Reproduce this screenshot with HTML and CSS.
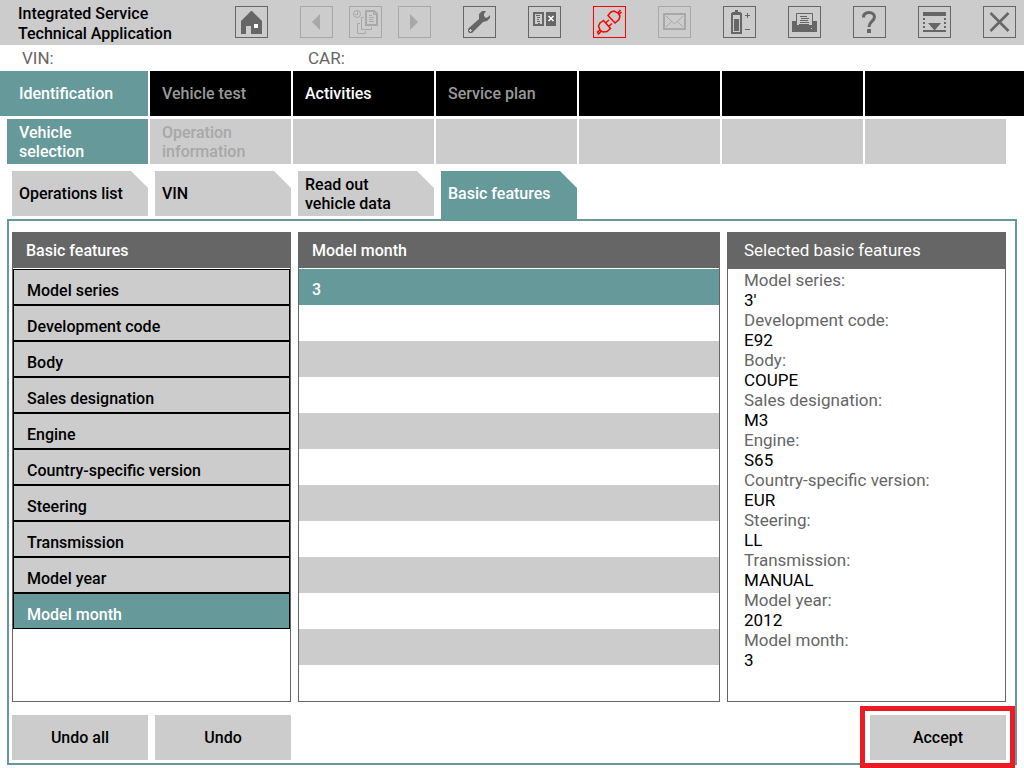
FILE: index.html
```
<!DOCTYPE html>
<html lang="en">
  <head>
    <meta charset="utf-8">
    <title>Integrated Service Technical Application</title>
    <link rel="stylesheet" href="styles.css">
  </head>
  <body>
    <header class="topbar">
      <h1 class="title">Integrated Service<br>Technical Application</h1>
      <div class="tools">
        <button class="tool" aria-label="Home"><svg viewBox="1 1 31 30"><path fill="currentColor" d="M16 5h1L27 15V28H16V20H11V28H6V15Z"/><path fill="#fff" d="M19 18h4v4h-4z"/></svg></button>
        <div class="history">
          <button class="tool" aria-label="Back" disabled><svg viewBox="1 1 31 30"><path fill="currentColor" d="M12 16L20 8V24Z"/></svg></button>
          <button class="tool" aria-label="History" disabled><svg viewBox="1 1 31 30"><g fill="none" stroke="currentColor"><circle cx="8" cy="8" r="3.5"/><path d="M8.500 5.500V8.500H6M15 11.500H12.500V23.500H22.500V21M11 17.500H8.500V27.500H16.500V25"/><path stroke-width="2" d="M17 5H25L28 8V19H17Z"/><path d="M24.500 5V8.500H28M20 9.500h3M20 11.500h5M20 13.500h4M20 15.500h5"/></g></svg></button>
          <button class="tool" aria-label="Forward" disabled><svg viewBox="1 1 31 30"><path fill="currentColor" d="M12 8L20 16L12 24Z"/></svg></button>
        </div>
        <button class="tool" aria-label="Settings"><svg viewBox="1 1 31 30"><path fill="currentColor" d="M19 5H23L21 8V10L23 12L25 11L27 9V12L24 15L20 16L11 25L9 27H6L5 25V23L7 21L16 13V8Z"/><path stroke="#ccc" d="M6 24.500h3M7.500 23v3"/></svg></button>
        <button class="tool" aria-label="Documents"><svg viewBox="1 1 31 30"><path fill="none" stroke="currentColor" stroke-width="2" d="M6 7H15V19H6Z"/><path stroke="currentColor" d="M8 9.500h4M9 11.500h3M9 13.500h2M9 15.500h3M10 17.500h2"/><path fill="currentColor" d="M18 6h10v14H18z"/><path stroke="#fff" stroke-width="1.500" d="M20.500 10L25.500 15M25.500 10L20.500 15"/></svg></button>
        <button class="tool alert" aria-label="Connection"><svg viewBox="1 1 31 30"><g fill="none" stroke="currentColor" stroke-width="1.500"><path d="M15 9.500L18 6L21 5L25 7L27 10L26 13.500L22 17ZM25 7L27.500 4M26 8.500L28.500 6"/><path d="M10.500 14.500L7 17L5.500 20L7 24L10 26L14 25.500L17.500 22.500ZM7 24L4.500 26L5.500 28L8 25.500M12.500 17L16 14M15.500 20.500L19 17.500"/></g></svg></button>
        <button class="tool" aria-label="Messages" disabled><svg viewBox="1 1 31 30"><path fill="none" stroke="currentColor" stroke-width="2" d="M6 8H27V23H6Z"/><path fill="none" stroke="currentColor" d="M8 10L16.500 18L25 10M8 21L13.500 15.500M25 21L19.500 15.500"/></svg></button>
        <button class="tool" aria-label="Battery"><svg viewBox="1 1 31 30"><path fill="none" stroke="currentColor" stroke-width="2" d="M9 8H18V27H9Z"/><path fill="currentColor" d="M12 4h3v2h3v2H9V6h3zM11 13h5v12h-5z"/><path stroke="currentColor" d="M22 9.500h5M24.500 7v5M22 23.500h5"/></svg></button>
        <button class="tool" aria-label="Print"><svg viewBox="1 1 31 30"><path fill="currentColor" d="M4 15H8V19H25V15H29V26H4Z"/><path fill="none" stroke="currentColor" d="M8.500 20V7.500H24.500V20M12 10.500h7M13 12.500h8M12 14.500h8M12 16.500h9M11 18.500h10"/><path stroke="#ccc" d="M23 22.500h1"/></svg></button>
        <button class="tool" aria-label="Help"><svg viewBox="1 1 31 30"><path fill="none" stroke="currentColor" stroke-width="3" d="M10.500 11.500C10.500 8 12.500 6.500 16 6.500C19.500 6.500 21.500 8.500 21.500 11C21.500 15 16 15.500 16 21"/><path fill="currentColor" d="M14 23h4v4h-4z"/></svg></button>
        <button class="tool" aria-label="Minimize"><svg viewBox="1 1 31 30"><path fill="currentColor" d="M5 6h23v4H5zM5 24h23v2H5zM10 17h13L17 24h-1z"/><path fill="none" stroke="currentColor" stroke-width="2" stroke-dasharray="2" d="M6 12V23M27 12V23"/></svg></button>
        <button class="tool" aria-label="Close"><svg viewBox="1 1 31 30"><path fill="none" stroke="currentColor" stroke-width="2.500" d="M7.500 7L25.500 25M25.500 7L7.500 25"/></svg></button>
      </div>
    </header>

    <div class="vehicle">
      <span>VIN:</span>
      <span>CAR:</span>
    </div>

    <nav class="menu main-menu">
      <a href="#" class="active">Identification</a>
      <a href="#" class="dim">Vehicle test</a>
      <a href="#">Activities</a>
      <a href="#" class="dim">Service plan</a>
      <span></span>
      <span></span>
      <span></span>
    </nav>
    <nav class="menu sub-menu">
      <a href="#" class="active">Vehicle<br>selection</a>
      <a href="#">Operation<br>information</a>
      <span></span>
      <span></span>
      <span></span>
      <span></span>
      <span></span>
    </nav>

    <nav class="tabs">
      <a href="#">Operations list</a>
      <a href="#">VIN</a>
      <a href="#">Read out<br>vehicle data</a>
      <a href="#" class="active">Basic features</a>
    </nav>

    <main class="panel">
      <div class="columns">
        <section class="box">
          <h2>Basic features</h2>
          <div class="features">
            <button>Model series</button>
            <button>Development code</button>
            <button>Body</button>
            <button>Sales designation</button>
            <button>Engine</button>
            <button>Country-specific version</button>
            <button>Steering</button>
            <button>Transmission</button>
            <button>Model year</button>
            <button class="active">Model month</button>
          </div>
        </section>
        <section class="box">
          <h2>Model month</h2>
          <ul class="values">
            <li class="active">3</li>
            <li></li>
            <li></li>
            <li></li>
            <li></li>
            <li></li>
            <li></li>
            <li></li>
            <li></li>
            <li></li>
            <li></li>
            <li></li>
          </ul>
        </section>
        <section class="box summary">
          <h2>Selected basic features</h2>
          <dl>
            <dt>Model series:</dt>
            <dd>3'</dd>
            <dt>Development code:</dt>
            <dd>E92</dd>
            <dt>Body:</dt>
            <dd>COUPE</dd>
            <dt>Sales designation:</dt>
            <dd>M3</dd>
            <dt>Engine:</dt>
            <dd>S65</dd>
            <dt>Country-specific version:</dt>
            <dd>EUR</dd>
            <dt>Steering:</dt>
            <dd>LL</dd>
            <dt>Transmission:</dt>
            <dd>MANUAL</dd>
            <dt>Model year:</dt>
            <dd>2012</dd>
            <dt>Model month:</dt>
            <dd>3</dd>
          </dl>
        </section>
      </div>
      <div class="actions">
        <button>Undo all</button>
        <button>Undo</button>
        <button class="accept">Accept</button>
      </div>
    </main>
  </body>
</html>
```
FILE: styles.css
```
* {
  box-sizing: border-box;
  }
body {
  margin: 0;
  padding-bottom: 3px;
  background: white;
  color: black;
  font: 500 16px/19px Roboto, "Liberation Sans", sans-serif;
  }
a {
  color: inherit;
  text-decoration: none;
  }
button {
  margin: 0;
  padding: 0;
  border: 0;
  border-radius: 0;
  background: #ccc;
  color: inherit;
  font: inherit;
  }

/* top bar */
.topbar {
  display: flex;
  justify-content: space-between;
  height: 45px;
  padding: 4px 8px 0 18px;
  background: #ccc;
  }
.title {
  margin: 0;
  font-size: 16px;
  font-weight: 500;
  line-height: 20px;
  white-space: nowrap;
  }
.tools {
  display: flex;
  gap: 32px;
  padding-top: 2px;
  }
.history {
  display: flex;
  gap: 16px;
  }
.tool {
  display: block;
  width: 33px;
  height: 32px;
  border: 1px solid;
  color: #666;
  }
.tool:disabled {
  color: #a8a8a8;
  }
.tool.alert {
  color: red;
  }
.tool svg {
  display: block;
  width: 31px;
  height: 30px;
  }

.vehicle {
  display: grid;
  grid-template-columns: 286px 1fr;
  padding: 4px 22px 3px;
  color: #666;
  font-size: 17px;
  font-weight: 400;
  }

/* menus */
.menu {
  display: grid;
  gap: 2px;
  height: 45px;
  }
.menu > * {
  display: flex;
  align-items: center;
  padding-left: 12px;
  }
.main-menu {
  grid-template-columns: 148px repeat(5, 141px) 1fr;
  color: white;
  }
.main-menu > * {
  background: black;
  }
.main-menu .dim {
  color: #999;
  }
.main-menu .active {
  padding-left: 19px;
  }
.sub-menu {
  grid-template-columns: repeat(7, 141px);
  margin: 3px 0 0 7px;
  color: #a8a8a8;
  }
.sub-menu > * {
  background: #ccc;
  }
.menu .active {
  background: #699;
  color: white;
  }

.tabs {
  display: flex;
  gap: 7px;
  height: 48px;
  margin: 7px 0 0 12px;
  }
.tabs a {
  display: flex;
  align-items: center;
  width: 136px;
  height: 45px;
  padding-left: 7px;
  background: #ccc;
  clip-path: polygon(0 0, calc(100% - 17px) 0, 100% 17px, 100% 100%, 0 100%);
  }
.tabs .active {
  height: 48px;
  padding-bottom: 3px;
  background: #699;
  color: white;
  }

/* content */
.panel {
  margin: 0 7px;
  padding: 11px 9px 3px 3px;
  border: 2px solid #699;
  }
.columns {
  display: grid;
  grid-template-columns: 279px 1fr 279px;
  gap: 7px;
  }
.box {
  border: 1px solid #666;
  }
.box h2 {
  height: 35px;
  margin: 0 0 1px;
  padding: 8px 13px;
  background: #666;
  color: white;
  font: inherit;
  }
.features button {
  display: block;
  width: 100%;
  height: 36px;
  padding: 7px 13px 0;
  border: 1px solid black;
  text-align: left;
  }
.values {
  margin: 0;
  padding: 0;
  list-style: none;
  }
.values li {
  height: 36px;
  padding: 11px 13px 6px;
  }
.values li:nth-child(odd) {
  background: #ccc;
  }
.features .active,
.values li.active {
  background: #699;
  color: white;
  }
.features .active {
  border-color: black;
  }
.summary {
  font-size: 17px;
  font-weight: 400;
  }
.summary h2 {
  height: 36px;
  margin: 0;
  padding-left: 16px;
  }
.summary dl {
  margin: 0;
  padding: 1px 16px;
  line-height: 20px;
  }
.summary dt {
  color: #666;
  }
.summary dd {
  margin: 0;
  }

.actions {
  display: flex;
  gap: 7px;
  margin-top: 13px;
  }
.actions button {
  width: 136px;
  height: 45px;
  }
.actions .accept {
  position: relative;
  margin-left: auto;
  }
.accept::after {
  content: "";
  position: absolute;
  inset: -9px -9px -8px -10px;
  border: 5px solid #ed1c24;
  }
```
